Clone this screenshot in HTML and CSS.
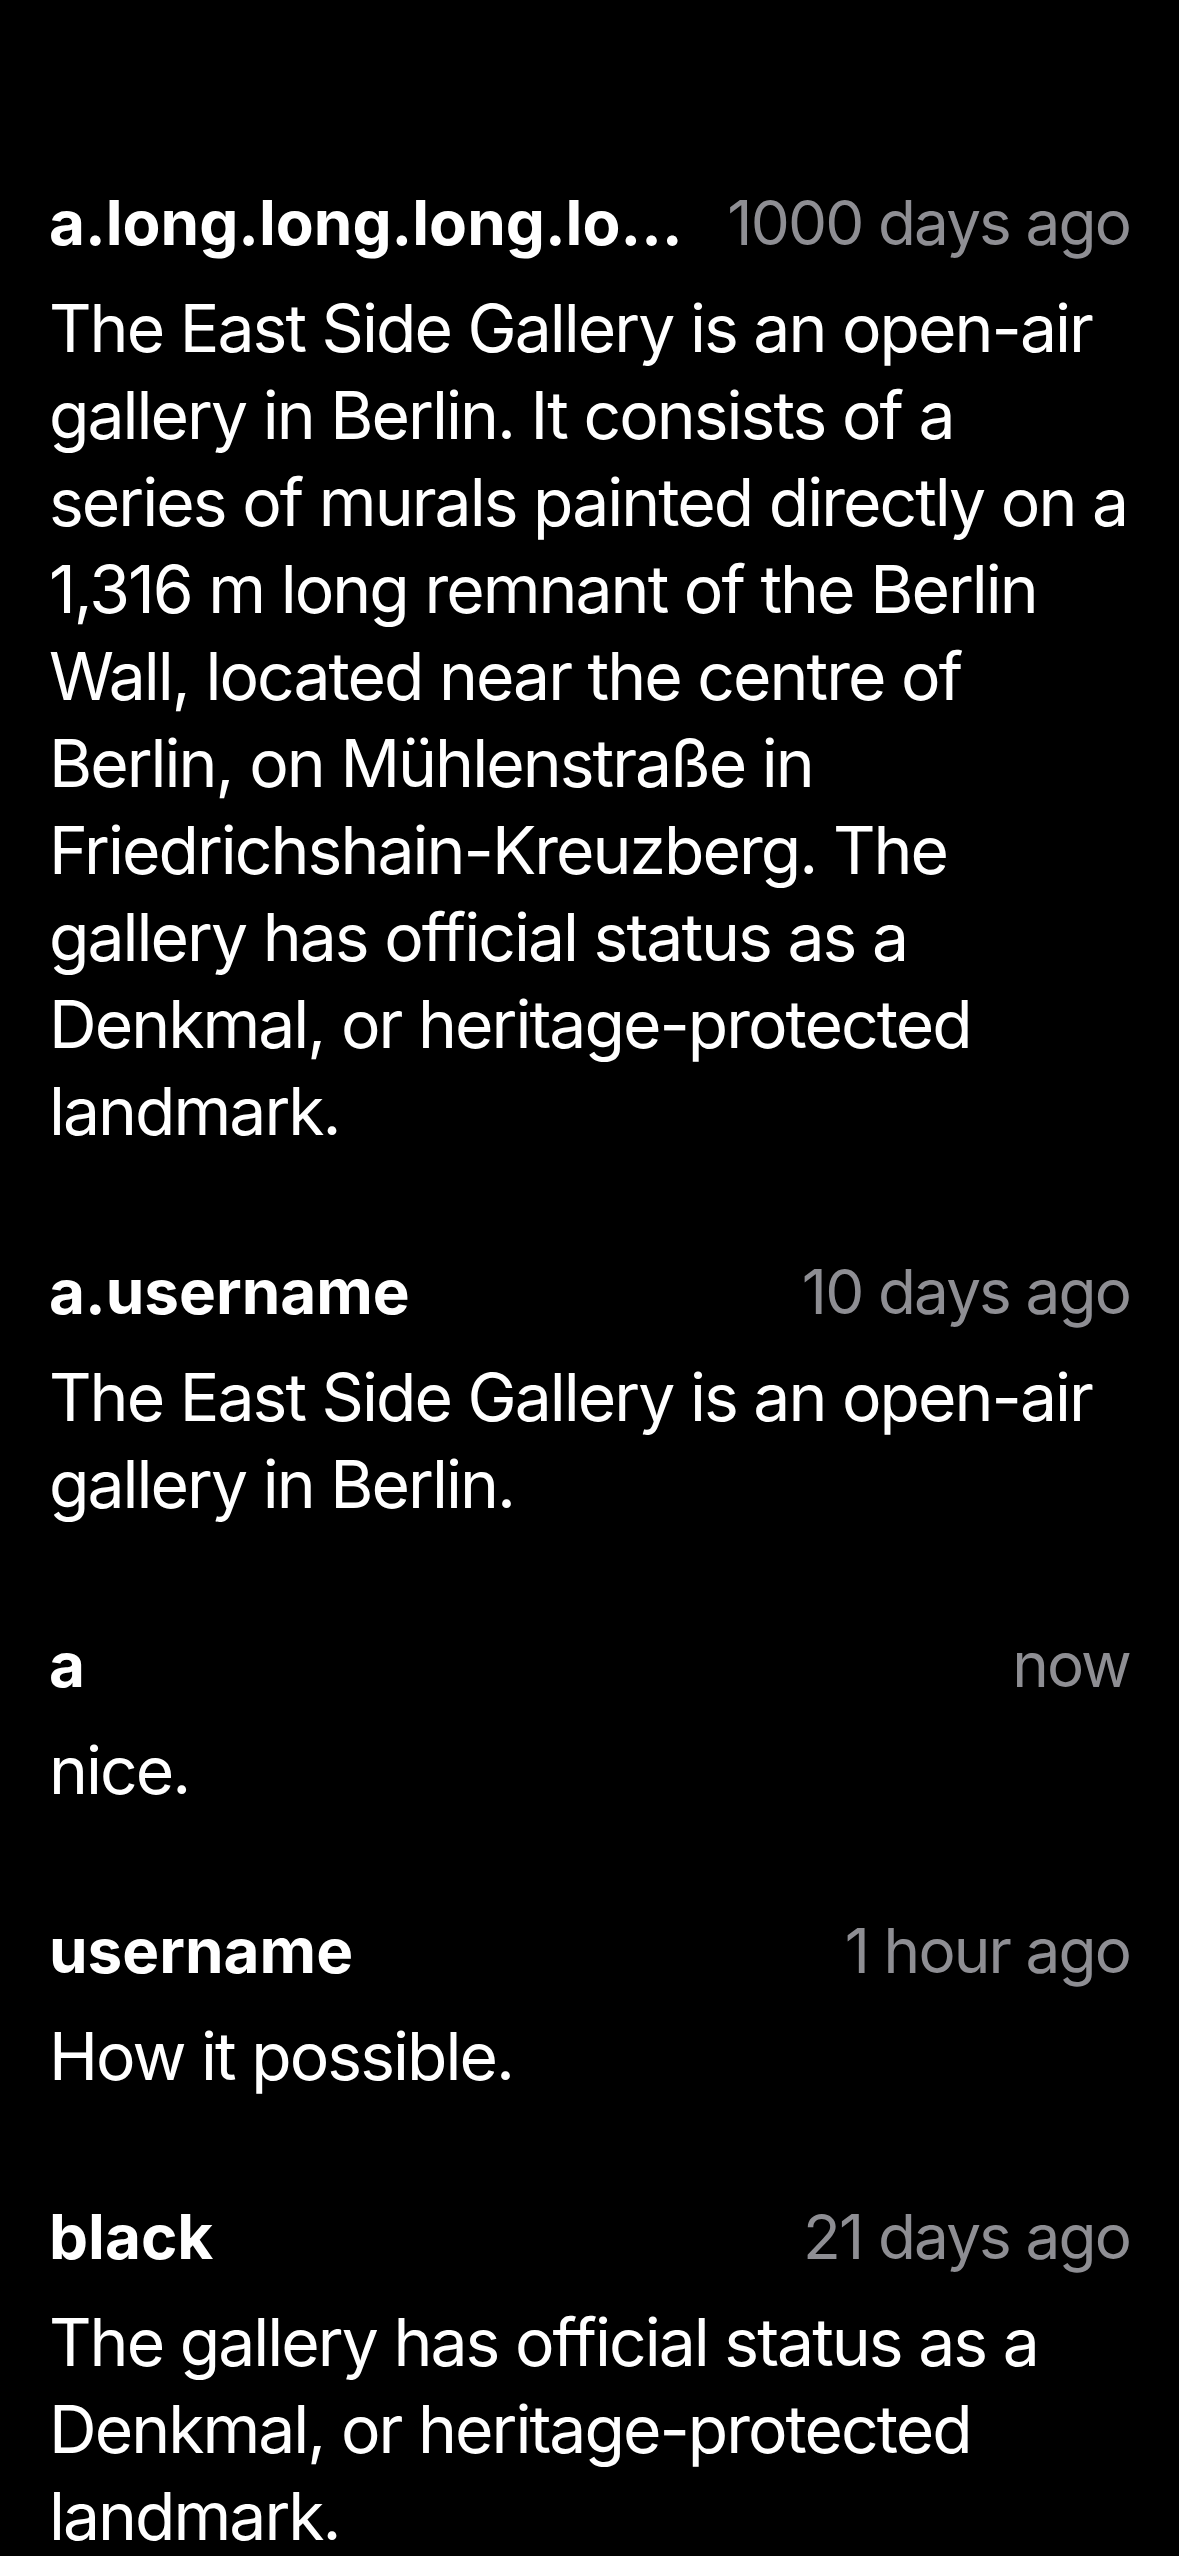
FILE: index.html
```html
<!DOCTYPE html>
<html lang="en">
<head>
<meta charset="utf-8">
<title>Comments</title>
<link rel="stylesheet" href="styles.css">
</head>
<body>
<main class="comments">
  <article class="comment">
    <header class="comment-head">
      <span class="author">a.long.long.long.lo…</span>
      <time class="time">1000 days ago</time>
    </header>
    <p class="comment-text">The East Side Gallery is an open-air gallery in Berlin. It consists of a series of murals painted directly on a 1,316 m long remnant of the Berlin Wall, located near the centre of Berlin, on Mühlenstraße in Friedrichshain-Kreuzberg. The gallery has official status as a Denkmal, or heritage-protected landmark.</p>
  </article>
  <article class="comment">
    <header class="comment-head">
      <span class="author">a.username</span>
      <time class="time">10 days ago</time>
    </header>
    <p class="comment-text">The East Side Gallery is an open-air gallery in Berlin.</p>
  </article>
  <article class="comment">
    <header class="comment-head">
      <span class="author">a</span>
      <time class="time">now</time>
    </header>
    <p class="comment-text">nice.</p>
  </article>
  <article class="comment">
    <header class="comment-head">
      <span class="author">username</span>
      <time class="time">1 hour ago</time>
    </header>
    <p class="comment-text">How it possible.</p>
  </article>
  <article class="comment">
    <header class="comment-head">
      <span class="author">black</span>
      <time class="time">21 days ago</time>
    </header>
    <p class="comment-text">The gallery has official status as a Denkmal, or heritage-protected landmark.</p>
  </article>
</main>
</body>
</html>
```

FILE: styles.css
```css
html, body {
  margin: 0;
  padding: 0;
  background: #000;
}

body {
  font-family: Inter, "Noto Sans", "Liberation Sans", sans-serif;
  color: #fff;
  -webkit-font-smoothing: antialiased;
}

.comments {
  display: flex;
  flex-direction: column;
  gap: 93px;
  padding: 179px 49px 0;
}

.comment-head {
  display: flex;
  align-items: baseline;
  justify-content: space-between;
  gap: 30px;
  font-size: 62px;
  line-height: 87px;
}

.author {
  min-width: 0;
  font-weight: 700;
  letter-spacing: 0;
  color: #fff;
  white-space: nowrap;
  overflow: hidden;
  text-overflow: ellipsis;
}

.time {
  flex-shrink: 0;
  color: #8e8e93;
  letter-spacing: -0.03em;
  white-space: nowrap;
}

.comment-text {
  margin: 19px 0 0;
  font-size: 66px;
  line-height: 87px;
  letter-spacing: -0.03em;
  color: #fff;
}
```
